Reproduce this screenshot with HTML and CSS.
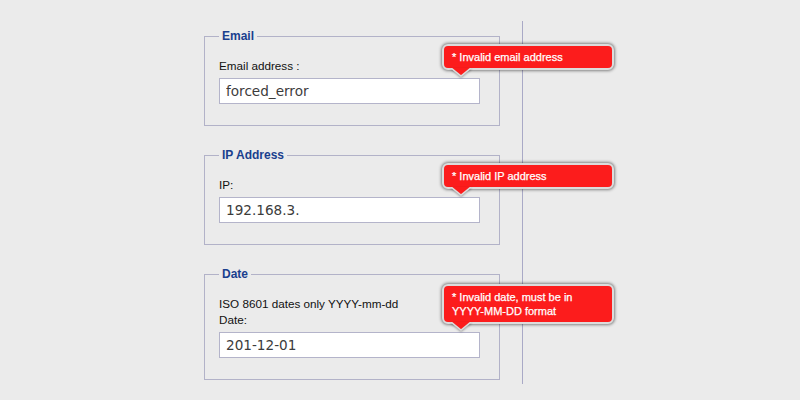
FILE: index.html
```html
<!DOCTYPE html>
<html>
<head>
<meta charset="utf-8">
<link rel="stylesheet" href="styles.css">
</head>
<body>
<div class="page">
  <div class="forms">
    <fieldset class="group">
      <legend>Email</legend>
      <label class="lbl">Email address :</label>
      <div class="field">
        <input class="txt" type="text" value="forced_error">
        <div class="tip">
          <div class="tip-body">* Invalid email address</div>
          <svg class="tip-arrow" width="22" height="10" viewBox="0 0 22 10"><polygon points="1,0 21,0 11,8" fill="#fc1c1c"/><polyline points="1,0 11,8 21,0" fill="none" stroke="#dcdcdc" stroke-width="1.6"/></svg>
        </div>
      </div>
    </fieldset>
    <fieldset class="group">
      <legend>IP Address</legend>
      <label class="lbl">IP:</label>
      <div class="field">
        <input class="txt" type="text" value="192.168.3.">
        <div class="tip">
          <div class="tip-body">* Invalid IP address</div>
          <svg class="tip-arrow" width="22" height="10" viewBox="0 0 22 10"><polygon points="1,0 21,0 11,8" fill="#fc1c1c"/><polyline points="1,0 11,8 21,0" fill="none" stroke="#dcdcdc" stroke-width="1.6"/></svg>
        </div>
      </div>
    </fieldset>
    <fieldset class="group">
      <legend>Date</legend>
      <label class="lbl">ISO 8601 dates only YYYY-mm-dd<br>Date:</label>
      <div class="field">
        <input class="txt" type="text" value="201-12-01">
        <div class="tip">
          <div class="tip-body">* Invalid date, must be in YYYY-MM-DD format</div>
          <svg class="tip-arrow" width="22" height="10" viewBox="0 0 22 10"><polygon points="1,0 21,0 11,8" fill="#fc1c1c"/><polyline points="1,0 11,8 21,0" fill="none" stroke="#dcdcdc" stroke-width="1.6"/></svg>
        </div>
      </div>
    </fieldset>
  </div>
  <div class="divider"></div>
</div>
</body>
</html>
```
FILE: styles.css
```css
html, body {
  margin: 0;
  padding: 0;
  background: #ebebeb;
}
body {
  font-family: "Liberation Sans", Arial, sans-serif;
  color: #111;
}
.page {
  display: flex;
  align-items: flex-start;
  padding: 21px 0 0 204px;
}
.forms {
  width: 296px;
  padding-top: 8px;
  display: flex;
  flex-direction: column;
  gap: 22px;
}
.group {
  margin: 0;
  border: 1px solid #b2b2c8;
  padding: 14px 19px 21px 14px;
  min-width: 0;
}
.group legend {
  font-family: "Liberation Sans", Arial, sans-serif;
  font-weight: bold;
  font-size: 12px;
  line-height: 15px;
  color: #1a3f8e;
  padding: 0 3px;
  margin: 0;
}
.lbl {
  display: block;
  font-size: 11.7px;
  line-height: 16px;
  color: #111;
}
.field {
  position: relative;
  margin-top: 4px;
}
.txt {
  display: block;
  box-sizing: border-box;
  width: 261px;
  height: 26px;
  margin: 0;
  padding: 0 6px;
  border: 1px solid #b4b4ca;
  background: #fff;
  font-family: "DejaVu Sans", Verdana, sans-serif;
  font-size: 13.6px;
  color: #3c3c3c;
  outline: none;
}
.tip {
  position: absolute;
  left: 223px;
  bottom: calc(100% + 8px);
  width: 172px;
}
.tip-body {
  box-sizing: border-box;
  width: 172px;
  background: #fc1c1c;
  border: 2px solid #dcdcdc;
  border-radius: 6px;
  box-shadow: 0 0 3px 1px rgba(0,0,0,0.45);
  padding: 4px 8px;
  font-family: "Liberation Sans", Arial, sans-serif;
  font-size: 11px;
  line-height: 14px;
  color: #fff;
  -webkit-text-stroke: 0.25px #fff;
}
.tip-arrow {
  position: absolute;
  left: 8px;
  top: calc(100% - 2px);
  display: block;
  filter: drop-shadow(0 1px 1px rgba(0,0,0,0.35));
}
.divider {
  margin-left: 22px;
  width: 0;
  height: 363px;
  border-left: 1px solid #a9a9c6;
}
```
